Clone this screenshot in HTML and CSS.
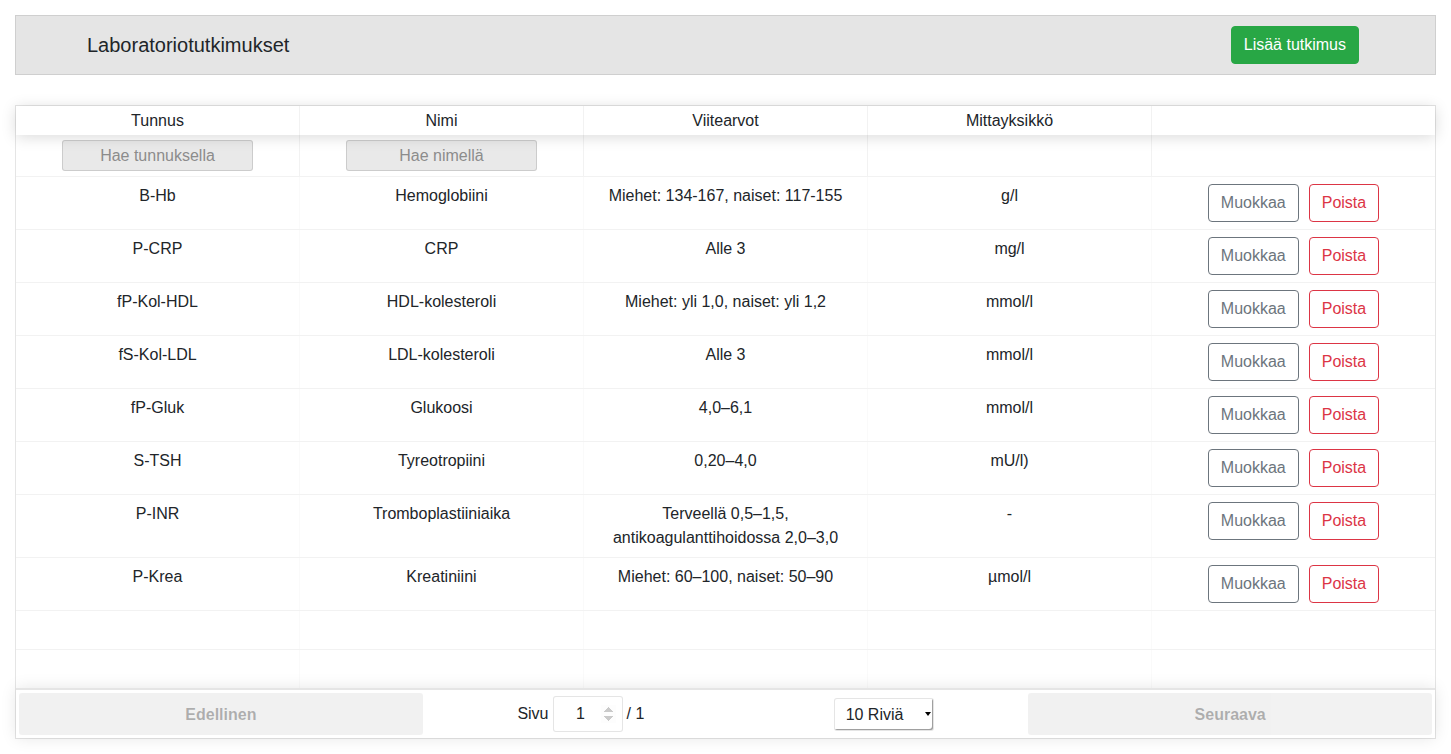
FILE: index.html
```html
<!DOCTYPE html>
<html lang="fi">
<head>
<meta charset="utf-8">
<title>Laboratoriotutkimukset</title>
<link rel="stylesheet" href="styles.css">
</head>
<body>
<div class="page">
  <div class="topbar">
    <h5 class="title">Laboratoriotutkimukset</h5>
    <button class="btn btn-success">Lisää tutkimus</button>
  </div>

  <div class="rtable">
    <div class="thead head">
      <div class="tr">
        <div class="th">Tunnus</div>
        <div class="th">Nimi</div>
        <div class="th">Viitearvot</div>
        <div class="th">Mittayksikkö</div>
        <div class="th"></div>
      </div>
    </div>
    <div class="thead filters">
      <div class="tr">
        <div class="th"><input class="filter" type="text" placeholder="Hae tunnuksella"></div>
        <div class="th"><input class="filter" type="text" placeholder="Hae nimellä"></div>
        <div class="th"></div>
        <div class="th"></div>
        <div class="th"></div>
      </div>
    </div>
    <div class="tbody">
      <div class="tr">
        <div class="td">B-Hb</div><div class="td">Hemoglobiini</div><div class="td">Miehet: 134-167, naiset: 117-155</div><div class="td">g/l</div>
        <div class="td actions"><button class="btn btn-outline-secondary">Muokkaa</button><button class="btn btn-outline-danger">Poista</button></div>
      </div>
      <div class="tr">
        <div class="td">P-CRP</div><div class="td">CRP</div><div class="td">Alle 3</div><div class="td">mg/l</div>
        <div class="td actions"><button class="btn btn-outline-secondary">Muokkaa</button><button class="btn btn-outline-danger">Poista</button></div>
      </div>
      <div class="tr">
        <div class="td">fP-Kol-HDL</div><div class="td">HDL-kolesteroli</div><div class="td">Miehet: yli 1,0, naiset: yli 1,2</div><div class="td">mmol/l</div>
        <div class="td actions"><button class="btn btn-outline-secondary">Muokkaa</button><button class="btn btn-outline-danger">Poista</button></div>
      </div>
      <div class="tr">
        <div class="td">fS-Kol-LDL</div><div class="td">LDL-kolesteroli</div><div class="td">Alle 3</div><div class="td">mmol/l</div>
        <div class="td actions"><button class="btn btn-outline-secondary">Muokkaa</button><button class="btn btn-outline-danger">Poista</button></div>
      </div>
      <div class="tr">
        <div class="td">fP-Gluk</div><div class="td">Glukoosi</div><div class="td">4,0–6,1</div><div class="td">mmol/l</div>
        <div class="td actions"><button class="btn btn-outline-secondary">Muokkaa</button><button class="btn btn-outline-danger">Poista</button></div>
      </div>
      <div class="tr">
        <div class="td">S-TSH</div><div class="td">Tyreotropiini</div><div class="td">0,20–4,0</div><div class="td">mU/l)</div>
        <div class="td actions"><button class="btn btn-outline-secondary">Muokkaa</button><button class="btn btn-outline-danger">Poista</button></div>
      </div>
      <div class="tr">
        <div class="td">P-INR</div><div class="td">Tromboplastiiniaika</div><div class="td">Terveellä 0,5–1,5, antikoagulanttihoidossa 2,0–3,0</div><div class="td">-</div>
        <div class="td actions"><button class="btn btn-outline-secondary">Muokkaa</button><button class="btn btn-outline-danger">Poista</button></div>
      </div>
      <div class="tr">
        <div class="td">P-Krea</div><div class="td">Kreatiniini</div><div class="td">Miehet: 60–100, naiset: 50–90</div><div class="td">µmol/l</div>
        <div class="td actions"><button class="btn btn-outline-secondary">Muokkaa</button><button class="btn btn-outline-danger">Poista</button></div>
      </div>
      <div class="tr pad">
        <div class="td">&nbsp;</div><div class="td">&nbsp;</div><div class="td">&nbsp;</div><div class="td">&nbsp;</div><div class="td">&nbsp;</div>
      </div>
      <div class="tr pad">
        <div class="td">&nbsp;</div><div class="td">&nbsp;</div><div class="td">&nbsp;</div><div class="td">&nbsp;</div><div class="td">&nbsp;</div>
      </div>
    </div>
    <div class="pagination">
      <div class="side"><button class="pbtn" disabled>Edellinen</button></div>
      <div class="center">
        <span class="pageinfo">Sivu <input class="pagejump" type="number" value="1"> / 1</span>
        <span class="pagesize"><select class="sizeselect"><option>10 Riviä</option><option>20 Riviä</option></select></span>
      </div>
      <div class="side"><button class="pbtn" disabled>Seuraava</button></div>
    </div>
  </div>
</div>
</body>
</html>
```

FILE: styles.css
```css
* { box-sizing: border-box; }
html, body { margin: 0; padding: 0; background: #fff; }
body {
  font-family: "Liberation Sans", Arial, sans-serif;
  font-size: 16px;
  line-height: 1.5;
  color: #212529;
}
.page { padding: 15px; }

.topbar {
  display: flex;
  align-items: center;
  justify-content: space-between;
  height: 60px;
  background: #e5e5e5;
  border: 1px solid #cfcfcf;
  padding: 0 76px 0 71px;
}
.title {
  margin: 0;
  font-size: 20px;
  font-weight: 400;
  line-height: 1.2;
}

.btn {
  display: inline-block;
  font-family: inherit;
  font-size: 16px;
  line-height: 24px;
  padding: 6px 12px;
  border: 1px solid transparent;
  border-radius: 4px;
  background: transparent;
  cursor: pointer;
}
.btn-success { background: #28a745; border-color: #28a745; color: #fff; }
.btn-outline-secondary { color: #6c757d; border-color: #6c757d; }
.btn-outline-danger { color: #dc3545; border-color: #dc3545; }

.rtable {
  margin-top: 30px;
  border: 1px solid rgba(0,0,0,0.1);
  display: flex;
  flex-direction: column;
}
.tr { display: flex; }
.th, .td {
  flex: 1 1 0;
  min-width: 0;
  text-align: center;
  border-right: 1px solid rgba(0,0,0,0.05);
}

.thead.head {
  position: relative;
  z-index: 1;
  box-shadow: 0 2px 15px 0 rgba(0,0,0,0.15);
  background: #fff;
}
.thead.head .th {
  padding: 6px 5px 4px;
  line-height: 18px;
  height: 29px;
}
.thead.filters { border-bottom: 1px solid rgba(0,0,0,0.05); }
.thead.filters .th { padding: 5px 5px; height: 41px; }
.filter {
  width: 191px;
  height: 31px;
  padding: 5px 7px;
  font-family: inherit;
  font-size: 16px;
  line-height: 19px;
  text-align: center;
  background: #e9e9e9;
  border: 1px solid rgba(0,0,0,0.12);
  border-radius: 3px;
  color: #495057;
  outline: none;
}
.filter::placeholder { color: #8c8c8c; }

.tbody .tr { border-bottom: 1px solid rgba(0,0,0,0.05); }
.tbody .tr:last-child { border-bottom: 0; }
.tbody .td {
  padding: 7px 5px;
  border-right-color: rgba(0,0,0,0.02);
}
.th:last-child, .td:last-child, .tbody .td:last-child { border-right: 0; }
.td.actions {
  display: flex;
  justify-content: center;
  align-items: flex-start;
  gap: 10px;
}

.pagination {
  position: relative;
  z-index: 1;
  display: flex;
  align-items: stretch;
  justify-content: space-between;
  padding: 3px;
  border-top: 2px solid rgba(0,0,0,0.1);
  box-shadow: 0 0 15px 0 rgba(0,0,0,0.1);
  background: #fff;
}
.side { flex: 1 1 0; text-align: center; }
.pbtn {
  display: block;
  width: 100%;
  height: 100%;
  border: 0;
  border-radius: 3px;
  padding: 7px 6px 5px;
  font-family: inherit;
  font-size: 16px;
  font-weight: 700;
  color: rgba(0,0,0,0.6);
  background: rgba(0,0,0,0.1);
  opacity: 0.5;
}
.center {
  flex: 1.5 1 0;
  display: flex;
  align-items: center;
  justify-content: space-around;
}
.pageinfo {
  margin: 3px 10px;
  white-space: nowrap;
  display: inline-flex;
  align-items: center;
  gap: 4px;
}
.pagejump {
  width: 70px;
  height: 36px;
  text-align: center;
  padding: 5px 6px 5px 7px;
  font-family: inherit;
  font-size: 16px;
  line-height: 24px;
  border: 1px solid rgba(0,0,0,0.1);
  border-radius: 3px;
  background: #fff;
  color: #212529;
  outline: none;
}
.pagejump::-webkit-inner-spin-button,
.pagejump::-webkit-outer-spin-button {
  opacity: 0.45;
}
.pagesize {
  margin: 3px 10px;
  position: relative;
  display: inline-block;
  height: 33px;
}
.pagesize::after {
  content: "";
  position: absolute;
  right: 3px;
  top: 14px;
  border-left: 3px solid transparent;
  border-right: 3px solid transparent;
  border-top: 4px solid #000;
  pointer-events: none;
}
.sizeselect {
  -webkit-appearance: none;
  appearance: none;
  display: block;
  height: 33px;
  width: 100px;
  padding: 4px 7px 4px 11px;
  font-family: inherit;
  font-size: 16px;
  line-height: 23px;
  border: 1px solid rgba(0,0,0,0.1);
  border-radius: 3px;
  box-shadow: inset -2px -2px 0 -1px #a0a0a0;
  background: #fff;
  color: #212529;
  outline: none;
}
```
